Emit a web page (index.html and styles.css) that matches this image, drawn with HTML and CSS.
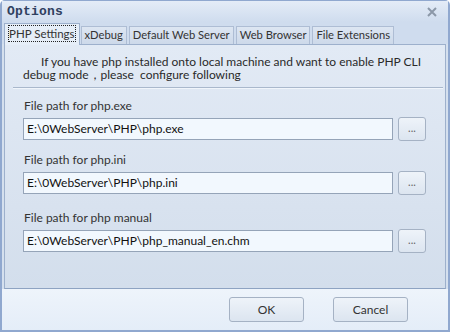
FILE: index.html
```html
<!DOCTYPE html>
<html>
<head>
<meta charset="utf-8">
<link rel="stylesheet" href="styles.css">
</head>
<body>
<div class="window">
  <div class="titlebar">
    <span class="title">Options</span>
    <svg class="close" width="12" height="12" viewBox="0 0 12 12"><path d="M2 2 L10 10 M10 2 L2 10" stroke="#8c98a8" stroke-width="2"/></svg>
  </div>
  <div class="tabs">
    <div class="tab active"><span class="focus">PHP Settings</span></div>
    <div class="tab">xDebug</div>
    <div class="tab">Default Web Server</div>
    <div class="tab">Web Browser</div>
    <div class="tab">File Extensions</div>
  </div>
  <div class="panel">
    <p class="intro">If you have php installed onto local machine and want to enable PHP CLI<br><span class="l2">debug mode，please&nbsp; configure following</span></p>
    <div class="sep"></div>
    <div class="field f1">
      <label>File path for php.exe</label>
      <div class="row"><div class="input">E:\0WebServer\PHP\php.exe</div><div class="btn small">...</div></div>
    </div>
    <div class="field f2">
      <label>File path for php.ini</label>
      <div class="row"><div class="input">E:\0WebServer\PHP\php.ini</div><div class="btn small">...</div></div>
    </div>
    <div class="field f3">
      <label>File path for php manual</label>
      <div class="row"><div class="input">E:\0WebServer\PHP\php_manual_en.chm</div><div class="btn small">...</div></div>
    </div>
  </div>
  <div class="footer">
    <div class="btn big">OK</div>
    <div class="btn big">Cancel</div>
  </div>
</div>
</body>
</html>
```
FILE: styles.css
```css
html, body { margin: 0; padding: 0; }
body {
  width: 450px; height: 332px; overflow: hidden;
  font-family: Lato, "Noto Sans", sans-serif;
  font-size: 12px; color: #2a2a2a;
}
.window {
  box-sizing: border-box;
  width: 450px; height: 332px;
  border: 2px solid #90a8cf;
  border-top: 1px solid #90a8cf;
  border-radius: 5px 5px 0 0;
  background: #d5e0ee;
  display: flex; flex-direction: column;
}
.titlebar {
  height: 21px;
  background: linear-gradient(#e4ecf7, #cfdcee);
  display: flex; align-items: center; justify-content: space-between;
  padding: 0 10px 0 5px;
}
.title {
  font-family: "Liberation Mono", "DejaVu Sans Mono", monospace;
  font-weight: bold; font-size: 13px; color: #2f3f5f;
  letter-spacing: 0.2px;
}
.close { display: block; }
.tabs {
  display: flex; align-items: flex-end;
  height: 22px; padding-left: 2px;
  background: #cfdcee;
}
.tab {
  height: 17px; line-height: 16px;
  padding: 0 3px;
  margin-right: 2px;
  border: 1px solid #aebdd4; border-bottom: none;
  background: linear-gradient(#dde6f2, #cdd9ea);
  color: #333; font-size: 11.2px;
  white-space: nowrap;
}
.tab.active {
  height: 21px; line-height: 20px;
  background: #e6eef8;
  border-color: #9db0cc;
  padding: 0 3px;
  margin-right: 1px;
  margin-bottom: -1px;
  font-size: 11.5px;
  position: relative; z-index: 1;
}
.focus { outline: 1px dotted #222; outline-offset: -1px; padding: 0 1px; display: inline-block; line-height: 17px; }
.panel {
  flex: 1;
  margin: 0 2px 0 2px;
  border: 1px solid #9db0cc;
  border-bottom: 1px solid #8ea3c2;
  background: linear-gradient(#e2eaf5, #d3deec);
  padding: 0 0 0 18px;
}
.intro {
  margin: 10px 0 0 0;
  line-height: 13px;
  padding-left: 18px;
  white-space: nowrap;
}
.intro .l2 { margin-left: -18px; }
.sep {
  height: 1px; background: #a9b8cc; margin: 6px 2px 0 -10px;
  box-shadow: 0 1px 0 #f0f5fb;
}
.field label { display: block; height: 17px; line-height: 16px; padding-left: 1px; color: #333; }
.f1 { margin-top: 10px; }
.f2 { margin-top: 11px; }
.f3 { margin-top: 15px; }
.row { display: flex; align-items: center; margin-top: 2px; }
.input {
  box-sizing: border-box;
  width: 370px; height: 22px;
  border: 1px solid #95a4b8;
  background: #f2f8fe;
  line-height: 20px; padding-left: 3px;
  color: #111;
}
.btn {
  box-sizing: border-box;
  border: 1px solid #a5b2c4; border-radius: 3px;
  background: linear-gradient(#eef3f9, #dce5f0);
  text-align: center; color: #333;
}
.btn.small { width: 28px; height: 24px; line-height: 20px; margin-left: 5px; font-size: 11px; color: #666; }
.footer {
  height: 41px;
  background: linear-gradient(#eef4fb, #e4edf8);
  display: flex; justify-content: flex-end; align-items: center;
  padding-right: 40px; gap: 29px;
}
.btn.big { width: 75px; height: 25px; line-height: 23px; }
```
